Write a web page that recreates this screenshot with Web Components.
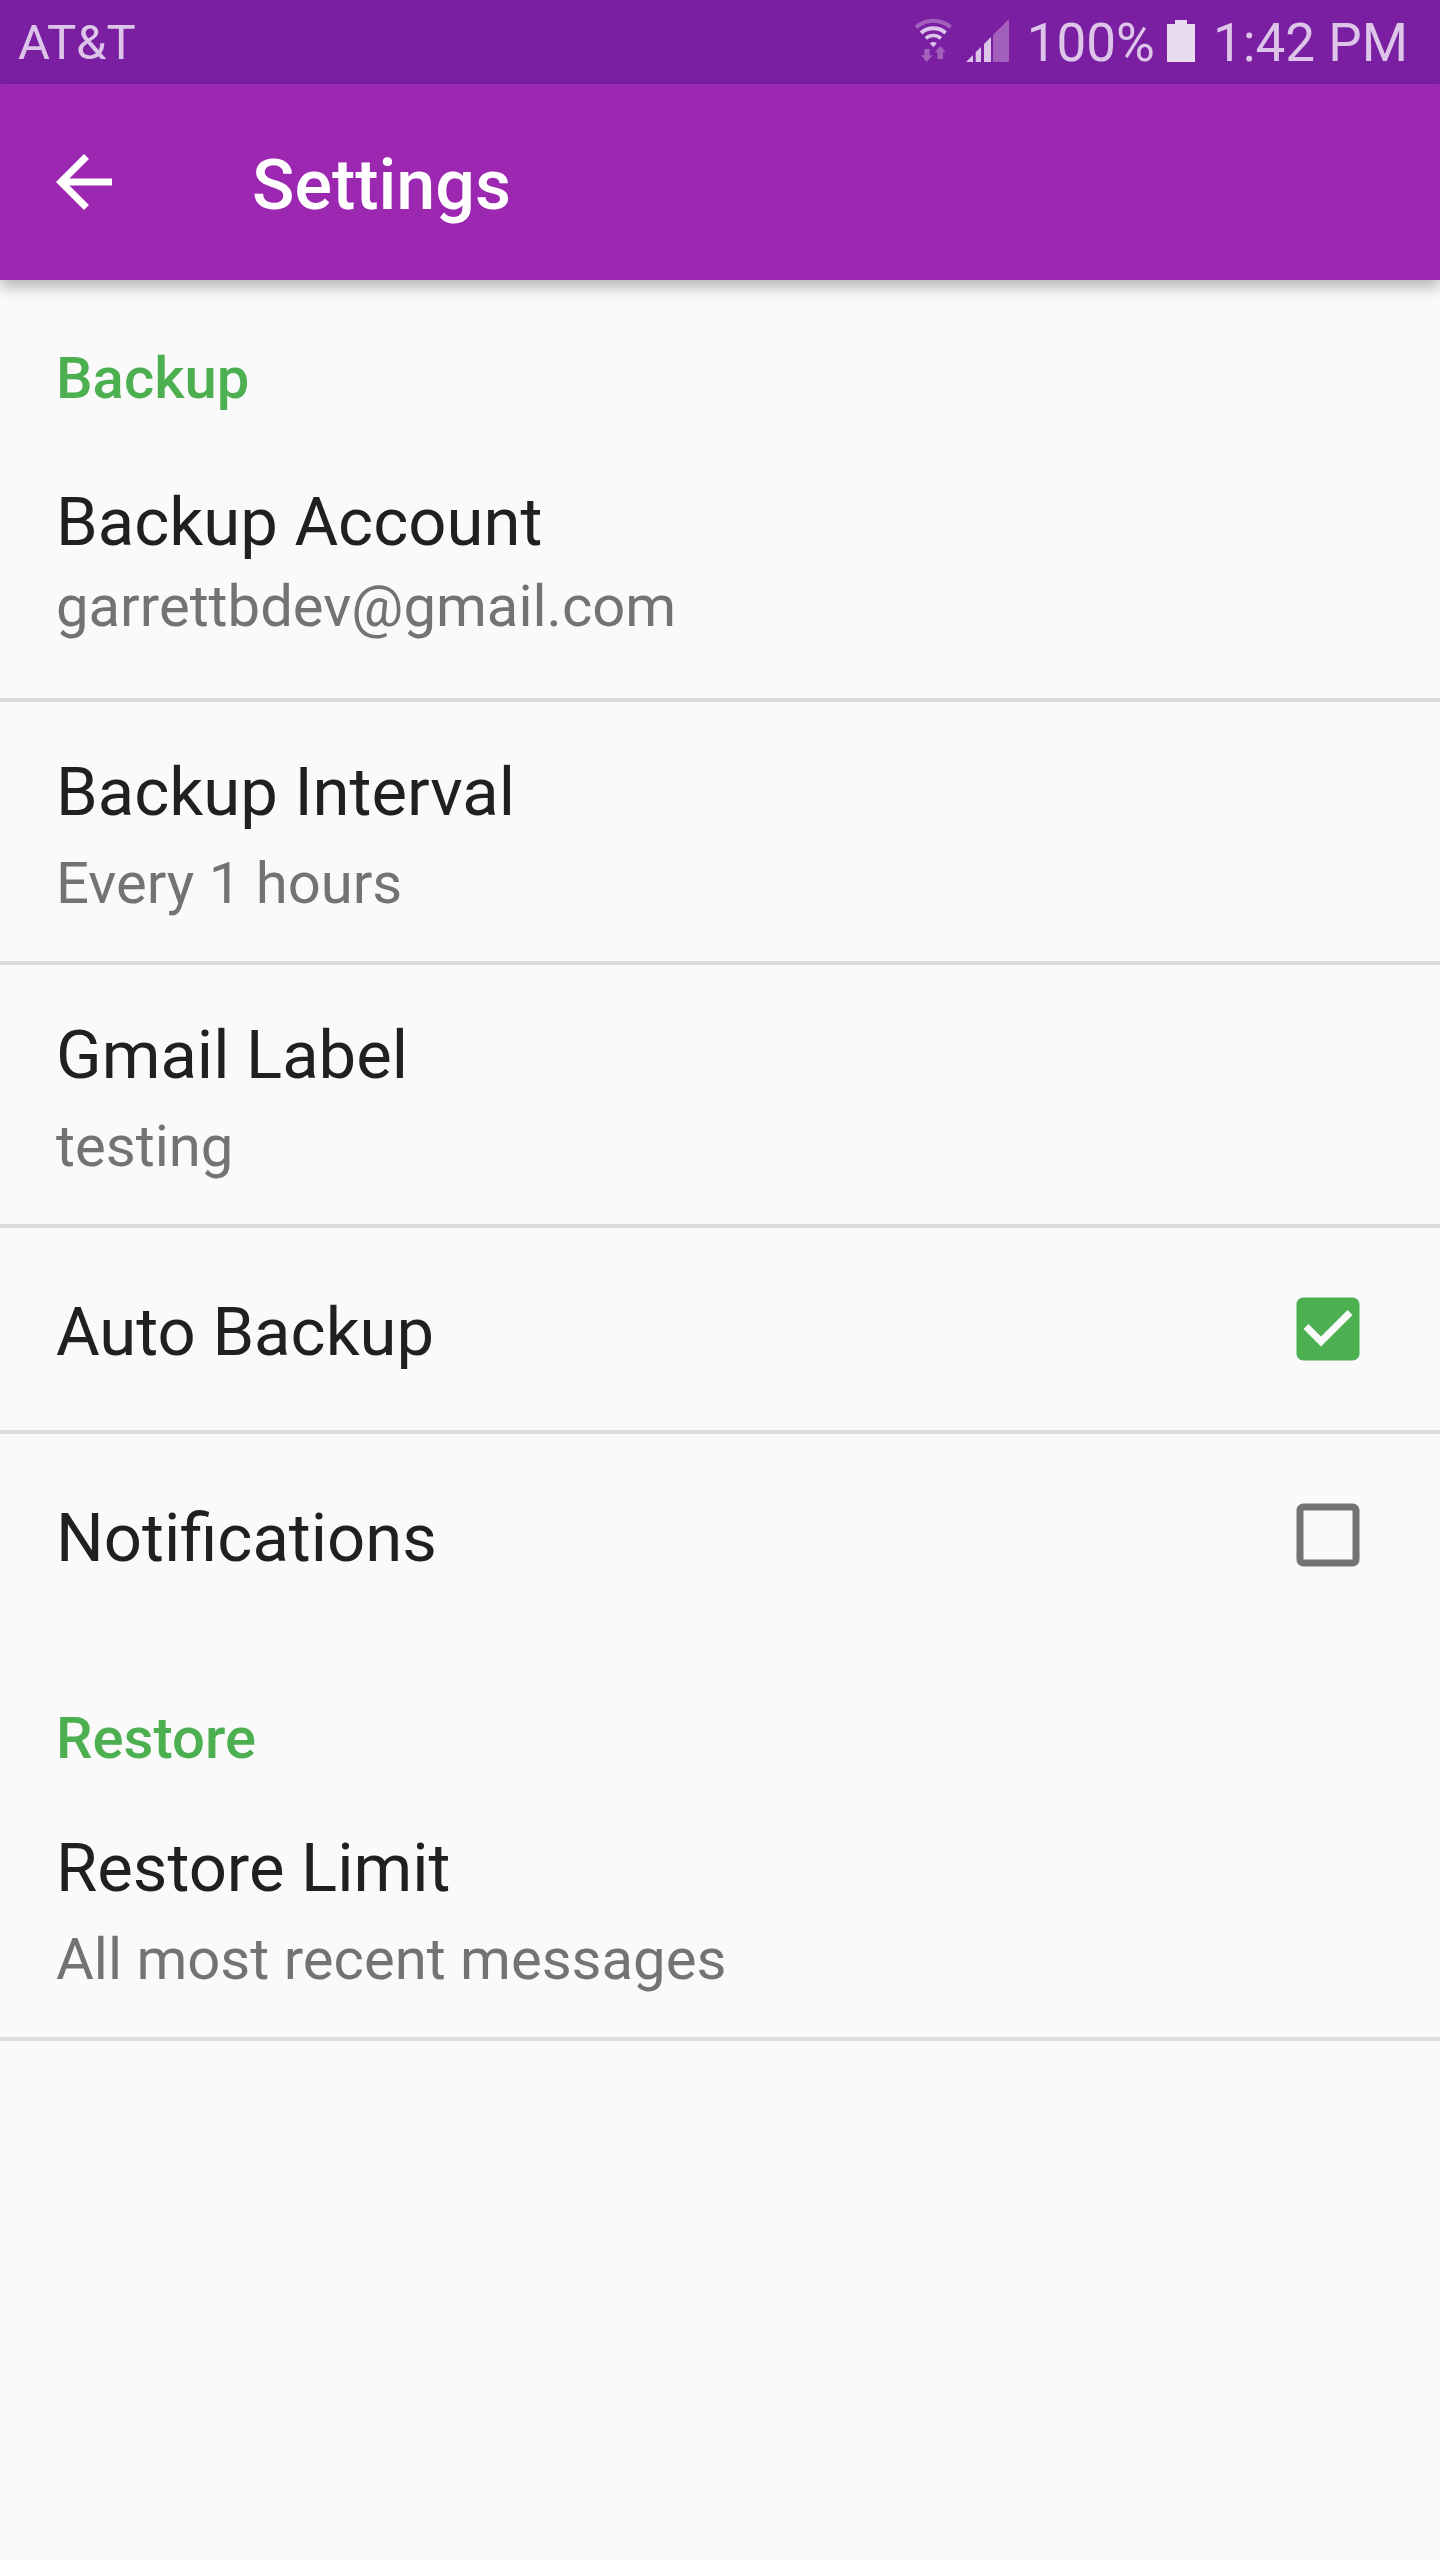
<!DOCTYPE html>
<html lang="en">
<head>
<meta charset="utf-8">
<title>Settings</title>
<style>
html, body { margin: 0; }
body { width: 1440px; min-height: 2560px; background: #fafafa; font-family: Roboto, sans-serif; font-kerning: normal; }
</style>
</head>
<body>
<settings-screen></settings-screen>
<script>
function define(name, html, setup) {
  const template = document.createElement('template');
  template.innerHTML = html;
  customElements.define(name, class extends HTMLElement {
    connectedCallback() {
      if (this.shadowRoot) return;
      this.attachShadow({ mode: 'open' }).append(template.content.cloneNode(true));
      if (setup) setup(this, this.shadowRoot);
    }
  });
}

define('status-bar', `
<style>
:host { display: flex; align-items: flex-start; box-sizing: border-box; height: 84px; padding: 0 32px 0 18px; background: #7b1fa2; color: #dcc5e8; white-space: nowrap; }
svg { display: block; flex: none; }
.carrier { font-size: 49px; line-height: 58px; margin-top: 14px; flex: 1; }
.num { font-size: 53px; line-height: 64px; margin-top: 11px; }
.net { margin: 17px 17px 0 0; }
.bat { margin: 20px 18px 0 12px; }
</style>
<span class="carrier">AT&amp;T</span>
<svg class="net" width="96" height="47" viewBox="42 51 288 141">
  <g fill="none" stroke="#dcc5e8" stroke-width="12">
    <path stroke="#a35fbc" d="M48 81.5A79 79 0 0 1 152 81.5"/>
    <path d="M63.2 98.7A56 56 0 0 1 136.8 98.7"/>
    <path stroke-width="11" d="M77.4 115A34.5 34.5 0 0 1 122.6 115"/>
  </g>
  <path fill="#dcc5e8" d="M100 142L89.500 130A17 17 0 0 1 110.500 130Z"/>
  <path fill="#a35fbc" d="M73 147H89V166H98L80 186L63 166H73ZM121 138L138 157H129V177H112V157H104Z"/>
  <path fill="#dcc5e8" d="M198 186L219 165V186ZM227 157L243 141V186H227ZM252 132L273 111V186H252Z"/>
  <path fill="#a35fbc" d="M279 105L327 57V186H279Z"/>
</svg>
<span class="num">100%</span>
<svg class="bat" width="28" height="42" viewBox="0 0 28 42"><path fill="#e9dcf0" d="M8 0H20V4H28V42H0V4H8Z"/></svg>
<span class="num">1:42 PM</span>`);

define('app-bar', `
<style>
:host { display: flex; align-items: center; box-sizing: border-box; height: 196px; padding-left: 42px; background: #9c27b0; color: #fff; position: relative; box-shadow: 0 7px 14px rgba(0,0,0,.28); }
svg { display: block; margin-right: 126px; }
h1 { margin: 6px 0 0; font-size: 70px; line-height: 82px; font-weight: 500; }
</style>
<svg width="84" height="84" viewBox="0 0 24 24"><path fill="#fff" d="M20 11H7.830l5.590-5.590L12 4l-8 8 8 8 1.410-1.410L7.830 13H20v-2z"/></svg>
<h1><slot></slot></h1>`);

define('section-header', `
<style>
:host { display: block; padding: 63px 56px 5px; font-size: 58px; line-height: 70px; font-weight: 500; color: #4caf50; }
</style>
<slot></slot>`);

define('check-box', `
<style>:host { display: block; } svg { display: block; }</style>
<svg width="84" height="84" viewBox="0 0 24 24"><path></path></svg>`, (host, root) => {
  const on = host.hasAttribute('checked');
  const path = root.querySelector('path');
  path.setAttribute('fill', on ? '#4caf50' : '#737373');
  path.setAttribute('d', on
    ? 'M19 3H5c-1.110 0-2 .9-2 2v14c0 1.100.89 2 2 2h14c1.110 0 2-.9 2-2V5c0-1.100-.89-2-2-2zm-9 14l-5-5 1.410-1.410L10 14.170l7.590-7.590L19 8l-9 9z'
    : 'M19 5v14H5V5h14m0-2H5c-1.100 0-2 .9-2 2v14c0 1.100.9 2 2 2h14c1.100 0 2-.9 2-2V5c0-1.100-.9-2-2-2z');
});

define('setting-row', `
<style>
:host { display: flex; align-items: center; box-sizing: content-box; height: var(--row-height, 259px); padding: 0 70px 0 56px; border-bottom: 4px solid #dcdcdc; }
:host([last]) { border-bottom: 0; }
.text { flex: 1; align-self: flex-start; padding-top: var(--top, 50px); }
.title { font-size: 67px; line-height: 80px; color: #202020; }
.summary { margin-top: var(--gap, 16px); font-size: 58px; line-height: 70px; color: #737373; }
</style>
<div class="text"><div class="title"><slot></slot></div><div class="summary"><slot name="summary"></slot></div></div>
<slot name="control"></slot>`, (host, root) => {
  if (!host.querySelector('[slot=summary]')) root.querySelector('.summary').remove();
});

define('settings-screen', `
<style>
:host { display: flex; flex-direction: column; }
.account { --row-height: 280px; --top: 64px; --gap: 9px; }
.toggle { --row-height: 202px; --top: 64px; }
.restore { padding-top: 67px; }
</style>
<status-bar></status-bar>
<app-bar>Settings</app-bar>
<section-header>Backup</section-header>
<setting-row class="account">Backup Account<span slot="summary">garrettbdev@gmail.com</span></setting-row>
<setting-row>Backup Interval<span slot="summary">Every 1 hours</span></setting-row>
<setting-row>Gmail Label<span slot="summary">testing</span></setting-row>
<setting-row class="toggle">Auto Backup<check-box slot="control" checked></check-box></setting-row>
<setting-row class="toggle" last>Notifications<check-box slot="control"></check-box></setting-row>
<section-header class="restore">Restore</section-header>
<setting-row>Restore Limit<span slot="summary">All most recent messages</span></setting-row>`);
</script>
</body>
</html>
